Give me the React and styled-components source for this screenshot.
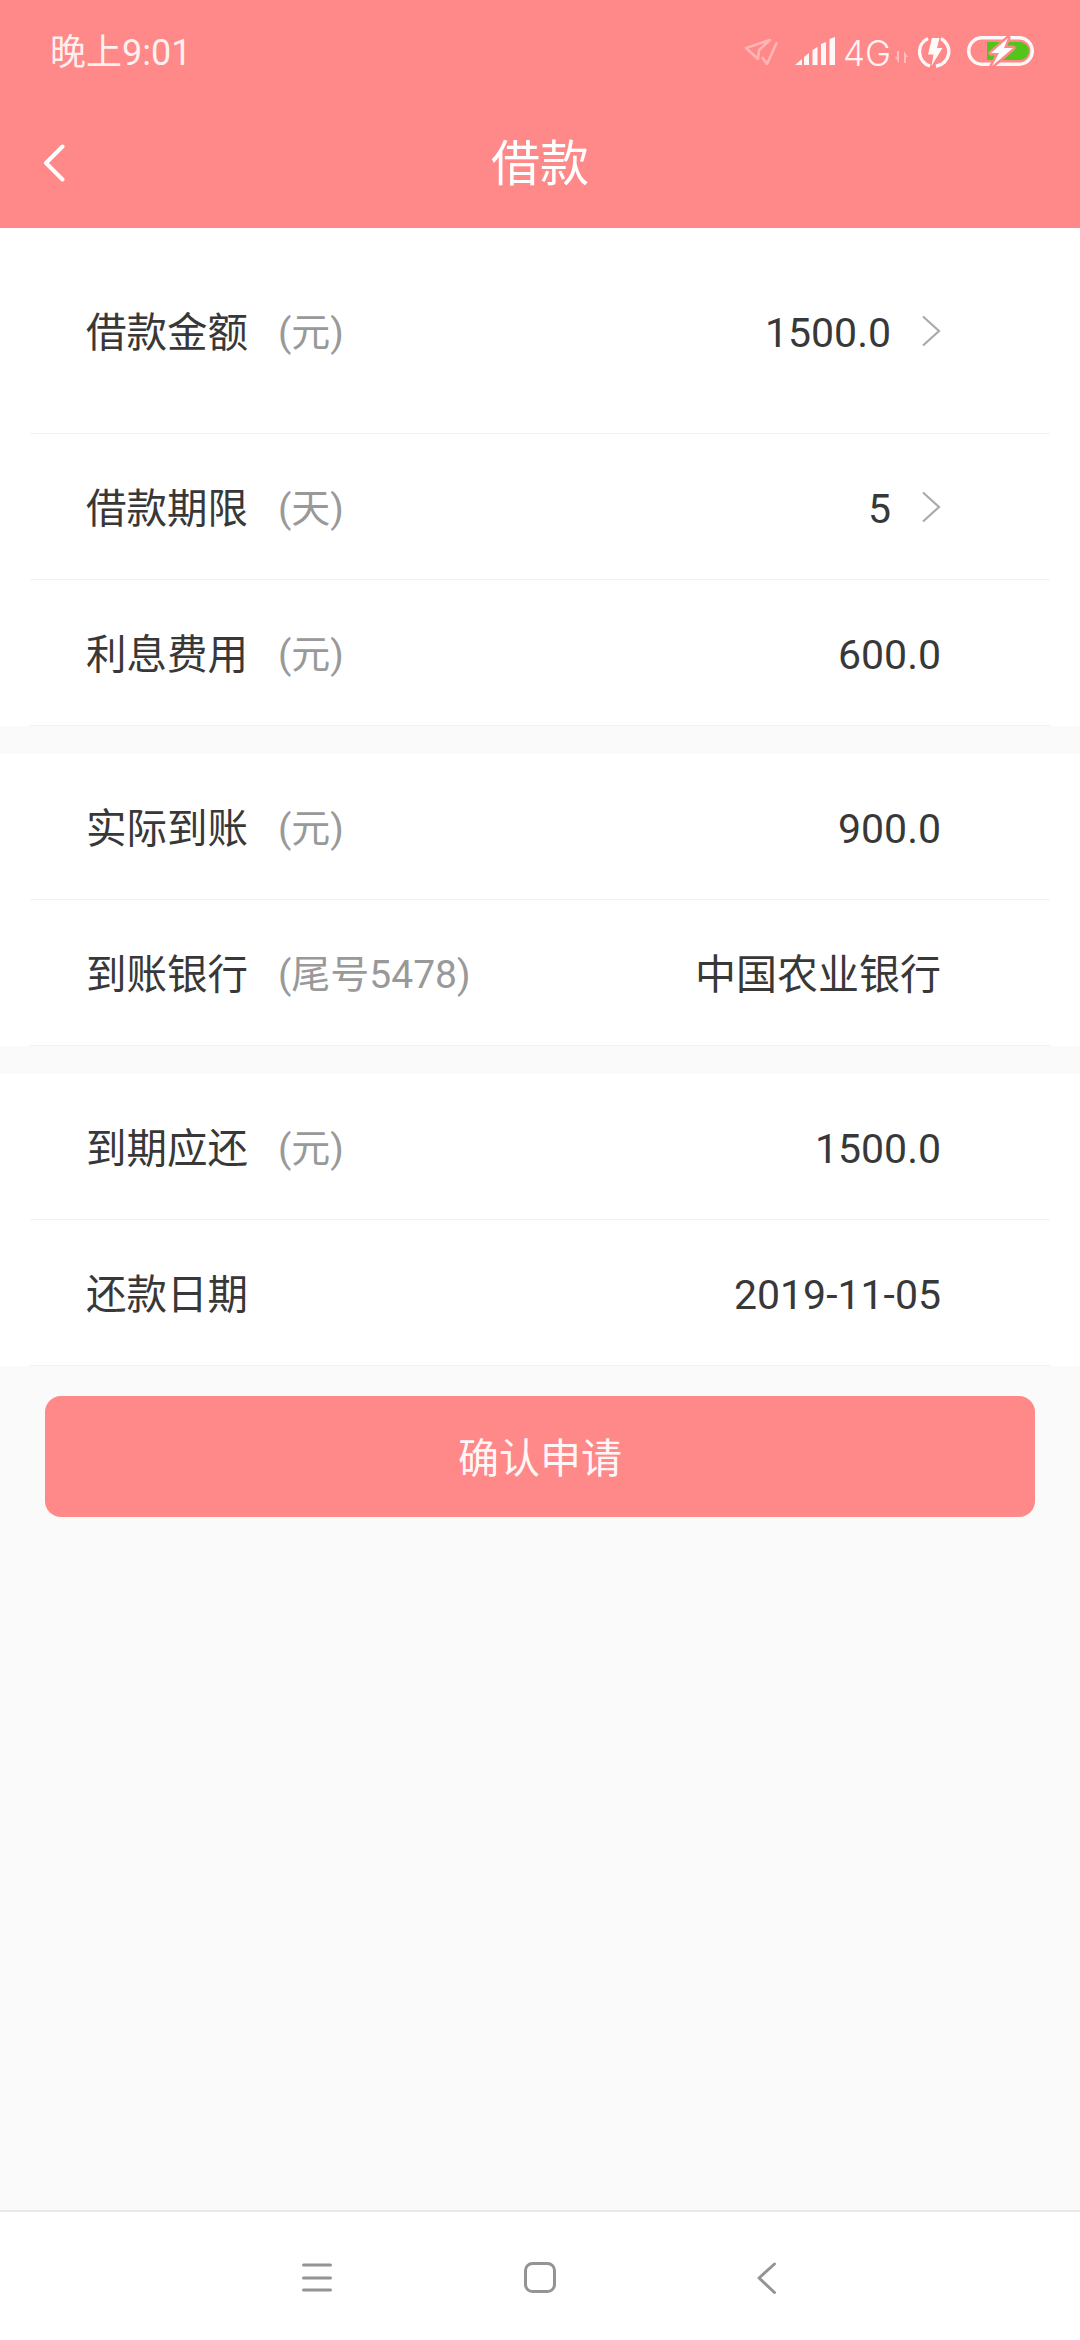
import React from 'react';
import styled, { createGlobalStyle } from 'styled-components';

const Global = createGlobalStyle`
  html, body { margin: 0; padding: 0; background: #fafafa; }
  #root { width: 1080px; }
  * { box-sizing: border-box; }
`;

const Page = styled.div`
  width: 1080px;
  height: 2340px;
  display: flex;
  flex-direction: column;
  background: #fafafa;
  font-family: Roboto, "Noto Sans CJK SC", sans-serif;
  color: #333;
  overflow: hidden;
`;

const Header = styled.header`
  height: 228px;
  flex: none;
  background: #ff8888;
  color: #fff;
  display: flex;
  flex-direction: column;
`;

const StatusBar = styled.div`
  height: 104px;
  flex: none;
  display: flex;
  align-items: center;
  justify-content: space-between;
  padding: 0 46px 0 50px;
`;

const Clock = styled.span`
  font-size: 36px;
  line-height: 44px;
  padding-top: 1px;
  color: rgba(255, 255, 255, 0.88);
`;

const StatusIcons = styled.div`
  display: flex;
  align-items: center;
  padding-bottom: 2px;
`;

const IconSlot = styled.svg`
  display: block;
  flex: none;
  margin: ${(p) => p.$margin || '0'};
`;

const NetworkText = styled.span`
  width: 48px;
  margin: 3px 0 0 8px;
  font-family: Inter, Roboto, sans-serif;
  font-size: 35px;
  font-weight: 300;
  line-height: 40px;
  white-space: nowrap;
  color: rgba(255, 255, 255, 0.92);
`;

const TitleBar = styled.div`
  flex: 1;
  position: relative;
  display: flex;
  align-items: center;
  justify-content: center;
  padding-bottom: 2px;
`;

const Title = styled.h1`
  margin: 0;
  font-size: 49px;
  font-weight: 400;
  line-height: 60px;
`;

const BackButton = styled.span`
  position: absolute;
  left: 42px;
  top: 40px;
  display: flex;
`;

const Group = styled.section`
  background: #fff;
  margin-bottom: ${(p) => (p.$last ? '0' : '28px')};
`;

const Row = styled.div`
  height: ${(p) => (p.$tall ? '206px' : '146px')};
  margin: 0 30px;
  padding: 4px 109px 0 56px;
  border-bottom: 1px solid #f3f3f3;
  display: flex;
  align-items: center;
  justify-content: space-between;
  font-size: 41px;
  line-height: 50px;
`;

const Label = styled.div`
  display: flex;
  align-items: center;
  font-size: 40.5px;
  color: #383838;
`;

const Hint = styled.span`
  margin-left: 30px;
  color: #999;
  font-size: 39px;
`;

const Value = styled.div`
  display: flex;
  align-items: center;
  color: #383838;
`;

const Chevron = styled.svg`
  display: block;
  margin: -3px 0 0 30px;
`;

const ConfirmButton = styled.button`
  display: block;
  flex: none;
  margin: 30px 45px 0;
  padding: 0 0 4px;
  width: 990px;
  height: 121px;
  border: 0;
  border-radius: 16px;
  background: #ff8888;
  color: rgba(255, 255, 255, 0.95);
  font-family: inherit;
  font-size: 41px;
`;

const Spacer = styled.div`
  flex: 1;
`;

const NavBar = styled.nav`
  flex: none;
  height: 130px;
  background: #fff;
  border-top: 2px solid #e9e9e9;
  display: flex;
  align-items: center;
  gap: 183px;
  padding: 4px 0 0 297px;
`;

const RowChevron = () => (
  <Chevron width="20" height="32" viewBox="0 0 20 32">
    <path d="M2 1.5 L18 16 L2 30.5" fill="none" stroke="#aaa" strokeWidth="2.2" />
  </Chevron>
);

const SendIcon = () => (
  <IconSlot width="36" height="30" viewBox="0 0 36 30" $margin="2px 15px 0 0">
    <g fill="none" stroke="#fff" strokeOpacity="0.38" strokeWidth="2.6" strokeLinejoin="round">
      <path d="M2 11 L26 3 L15 13 L14 22 Z" />
      <path d="M33 5 L23 27 L18 20" />
    </g>
  </IconSlot>
);

const SignalIcon = () => (
  <IconSlot width="40" height="28" viewBox="0 0 40 28">
    <g fill="#fff" fillOpacity="0.94">
      <path d="M0 28 L7 22 V28 Z" />
      <path d="M9 20 L14 16 V28 H9 Z" />
      <path d="M17.5 13 L22.5 10 V28 H17.5 Z" />
      <path d="M26 7 L31 5 V28 H26 Z" />
      <path d="M34.5 2 L40 0 V28 H34.5 Z" />
    </g>
  </IconSlot>
);

const ArrowsIcon = () => (
  <IconSlot width="13" height="12" viewBox="0 0 13 12" $margin="12px 10px 0 4px">
    <g fill="#fff" fillOpacity="0.45">
      <path d="M0 6 H2 V0 H4 V12 Z" />
      <path d="M13 6 H11 V12 H9 V0 Z" />
    </g>
  </IconSlot>
);

const BoltCircle = () => (
  <IconSlot width="33" height="33" viewBox="0 0 33 33" $margin="0 16px 0 0">
    <g fill="none" stroke="#fff" strokeOpacity="0.94" strokeWidth="3.4">
      <path d="M10 3.5 A14.8 14.8 0 0 0 12 31" />
      <path d="M23 3.5 A14.8 14.8 0 0 1 18 31.2" />
    </g>
    <path d="M14 3 H21.5 L19 13 H24.5 L13.5 31 L15.5 19.5 H10 Z" fill="#fff" fillOpacity="0.96" />
  </IconSlot>
);

const BatteryIcon = () => (
  <IconSlot width="67" height="30" viewBox="0 0 67 30">
    <rect x="1.75" y="1.75" width="63.5" height="26.5" rx="13.25" fill="none" stroke="#fff" strokeOpacity="0.94" strokeWidth="3.5" />
    <path d="M20 6 H53 A9 9 0 0 1 53 24 H20 Z" fill="#52c41a" />
    <path
      d="M41 2 L24 17 H32 L25 30 L46 12 H37 Z"
      fill="#fff"
      stroke="#ff8888"
      strokeWidth="5"
      strokeLinejoin="round"
      style={{ paintOrder: 'stroke' }}
    />
  </IconSlot>
);

const BackIcon = () => (
  <IconSlot width="24" height="38" viewBox="0 0 24 38">
    <path d="M20.5 2.5 L4 19 L20.5 35.5" fill="none" stroke="#fff" strokeWidth="4" strokeLinecap="round" strokeLinejoin="round" />
  </IconSlot>
);

const MenuIcon = () => (
  <IconSlot width="40" height="40" viewBox="0 0 40 40">
    <g stroke="#949494" strokeWidth="3" strokeLinecap="round">
      <path d="M6.5 7 H33.5" />
      <path d="M6.5 20 H33.5" />
      <path d="M6.5 32 H33.5" />
    </g>
  </IconSlot>
);

const HomeIcon = () => (
  <IconSlot width="40" height="40" viewBox="0 0 40 40">
    <rect x="5.5" y="5.5" width="29" height="28" rx="7" fill="none" stroke="#949494" strokeWidth="3" />
  </IconSlot>
);

const NavBackIcon = () => (
  <IconSlot width="40" height="40" viewBox="0 0 40 40">
    <path d="M31.5 6 L16 20 L31.5 34.5" fill="none" stroke="#949494" strokeWidth="3" strokeLinecap="round" strokeLinejoin="round" />
  </IconSlot>
);

const groups = [
  [
    { label: '借款金额', hint: '(元)', value: '1500.0', arrow: true, tall: true },
    { label: '借款期限', hint: '(天)', value: '5', arrow: true },
    { label: '利息费用', hint: '(元)', value: '600.0' },
  ],
  [
    { label: '实际到账', hint: '(元)', value: '900.0' },
    { label: '到账银行', hint: '(尾号5478)', value: '中国农业银行' },
  ],
  [
    { label: '到期应还', hint: '(元)', value: '1500.0' },
    { label: '还款日期', value: '2019-11-05' },
  ],
];

export default function App() {
  return (
    <Page>
      <Global />
      <Header>
        <StatusBar>
          <Clock>晚上9:01</Clock>
          <StatusIcons>
            <SendIcon />
            <SignalIcon />
            <NetworkText>4G</NetworkText>
            <ArrowsIcon />
            <BoltCircle />
            <BatteryIcon />
          </StatusIcons>
        </StatusBar>
        <TitleBar>
          <BackButton>
            <BackIcon />
          </BackButton>
          <Title>借款</Title>
        </TitleBar>
      </Header>
      {groups.map((rows, i) => (
        <Group key={i} $last={i === groups.length - 1}>
          {rows.map((r) => (
            <Row key={r.label} $tall={r.tall}>
              <Label>
                {r.label}
                {r.hint && <Hint>{r.hint}</Hint>}
              </Label>
              <Value>
                {r.value}
                {r.arrow && <RowChevron />}
              </Value>
            </Row>
          ))}
        </Group>
      ))}
      <ConfirmButton>确认申请</ConfirmButton>
      <Spacer />
      <NavBar>
        <MenuIcon />
        <HomeIcon />
        <NavBackIcon />
      </NavBar>
    </Page>
  );
}
